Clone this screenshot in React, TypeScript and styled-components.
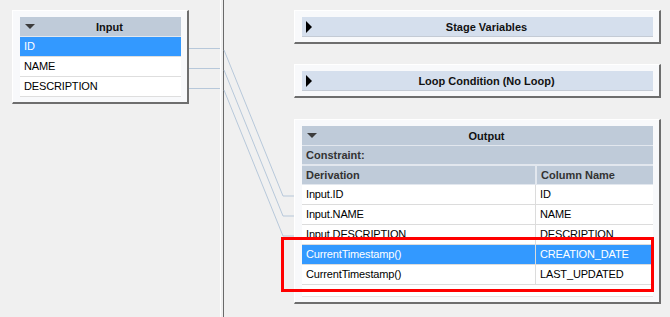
import React from "react"
import styled, { createGlobalStyle } from "styled-components"

//------------------------------
// Data
//------------------------------
type Mapping = { derivation: string; column: string; selected?: boolean }

const inputColumns = ["ID", "NAME", "DESCRIPTION"]

const mappings: Mapping[] = [
  { derivation: "Input.ID", column: "ID" },
  { derivation: "Input.NAME", column: "NAME" },
  { derivation: "Input.DESCRIPTION", column: "DESCRIPTION" },
  { derivation: "CurrentTimestamp()", column: "CREATION_DATE", selected: true },
  { derivation: "CurrentTimestamp()", column: "LAST_UPDATED" },
]

// connector links: [input row y, output row y]
const links: [number, number][] = [
  [48, 196],
  [68, 216],
  [88, 236],
]

//------------------------------
// Main
//------------------------------
export default function App() {
  return (
    <>
      <GlobalStyle />
      <Screen>
        <LeftPane>
          <Panel $width={177}>
            <PanelHeader $tone="dark">
              <ArrowCell>
                <DownArrow />
              </ArrowCell>
              <Title>Input</Title>
            </PanelHeader>
            <List>
              {inputColumns.map((name, i) => (
                <ListRow key={name} $selected={i === 0}>
                  {name}
                </ListRow>
              ))}
            </List>
          </Panel>
        </LeftPane>
        <Splitter />
        <RightPane>
          <Panel>
            <PanelHeader $tone="light">
              <ArrowCell>
                <RightArrow />
              </ArrowCell>
              <Title>Stage Variables</Title>
            </PanelHeader>
          </Panel>
          <Panel>
            <PanelHeader $tone="light">
              <ArrowCell>
                <RightArrow />
              </ArrowCell>
              <Title>Loop Condition (No Loop)</Title>
            </PanelHeader>
          </Panel>
          <OutputPanel>
            <PanelHeader $tone="dark">
              <ArrowCell>
                <DownArrow />
              </ArrowCell>
              <Title>Output</Title>
            </PanelHeader>
            <SubHeader>Constraint:</SubHeader>
            <Grid>
              <HeadCell>Derivation</HeadCell>
              <HeadCell $divider>Column Name</HeadCell>
            </Grid>
            <TableBody>
              {mappings.map((m, i) => (
                <Grid key={i}>
                  <Cell $selected={m.selected}>{m.derivation}</Cell>
                  <Cell $selected={m.selected} $divider>
                    {m.column}
                  </Cell>
                </Grid>
              ))}
            </TableBody>
            <Highlight />
          </OutputPanel>
        </RightPane>
        <Links width={670} height={317}>
          {links.map(([from, to]) => (
            <g key={from}>
              <line x1={189} y1={from + 0.5} x2={220} y2={from + 0.5} />
              <polyline
                points={`224,${from + 2} 283,${to} 294,${to}`}
                fill="none"
              />
            </g>
          ))}
        </Links>
      </Screen>
    </>
  )
}

//------------------------------
// Styles
//------------------------------
const GlobalStyle = createGlobalStyle`
  * { box-sizing: border-box; }
  body {
    margin: 0;
    background: #f0f0f0;
    font-family: "Liberation Sans", Arial, sans-serif;
    font-size: 11px;
    color: #000;
  }
`

const Screen = styled.div`
  position: relative;
  display: flex;
  width: 670px;
  height: 317px;
  overflow: hidden;
  background: #f0f0f0;
`

const LeftPane = styled.div`
  width: 220px;
  padding: 10px 0 0 12px;
`

const Splitter = styled.div`
  width: 4px;
  border-left: 1px solid #ffffff;
  border-right: 1px solid #6a6a6a;
`

const RightPane = styled.div`
  flex: 1;
  display: flex;
  flex-direction: column;
  gap: 20px;
  padding: 10px 9px 0 70px;
`

const Panel = styled.div<{ $width?: number }>`
  width: ${(p) => (p.$width ? `${p.$width}px` : "100%")};
  padding: 6px 6px 5px 7px;
  background: #f8f9fb;
  border-top: 1px solid #ffffff;
  border-left: 1px solid #ffffff;
  border-right: 2px solid #6e6e6e;
  border-bottom: 2px solid #6e6e6e;
`

const OutputPanel = styled(Panel)`
  position: relative;
  margin-top: 1px;
`

const PanelHeader = styled.div<{ $tone: "dark" | "light" }>`
  display: grid;
  grid-template-columns: 18px 1fr;
  align-items: center;
  height: 20px;
  background: ${(p) => (p.$tone === "dark" ? "#bfcbd9" : "#d5dfed")};
  border-bottom: 1px solid ${(p) => (p.$tone === "dark" ? "#e2e7ee" : "#c4cbd5")};
`

const ArrowCell = styled.div`
  display: flex;
  align-items: center;
  padding-left: 5px;
`

const DownArrow = styled.span`
  width: 0;
  height: 0;
  border-left: 5px solid transparent;
  border-right: 5px solid transparent;
  border-top: 5px solid #3c3c3c;
`

const RightArrow = styled.span`
  width: 0;
  height: 0;
  margin-left: -1px;
  border-top: 6px solid transparent;
  border-bottom: 6px solid transparent;
  border-left: 6px solid #000;
`

const Title = styled.div`
  text-align: center;
  font-weight: bold;
  color: #111;
  padding-right: 18px;
  transform: translateX(9px);
`

const List = styled.div`
  display: flex;
  flex-direction: column;
  background: #fff;
`

const ListRow = styled.div<{ $selected?: boolean }>`
  height: 20px;
  line-height: 19px;
  padding-left: 4px;
  letter-spacing: -0.15px;
  border-bottom: 1px solid #dedede;
  background: ${(p) => (p.$selected ? "#3399ff" : "#ffffff")};
  color: ${(p) => (p.$selected ? "#ffffff" : "#000")};
`

const SubHeader = styled.div`
  height: 20px;
  line-height: 18px;
  padding-left: 4px;
  background: #bfcbd9;
  border-bottom: 2px solid #e2e7ee;
  font-weight: bold;
  color: #333;
`

const Grid = styled.div`
  display: grid;
  grid-template-columns: 233px 1fr;
`

const HeadCell = styled.div<{ $divider?: boolean }>`
  height: 19px;
  line-height: 18px;
  padding-left: 4px;
  background: #bfcbd9;
  border-bottom: 1px solid #e2e7ee;
  border-left: ${(p) => (p.$divider ? "2px solid #e2e7ee" : "none")};
  font-weight: bold;
  color: #333;
`

const TableBody = styled.div`
  background: #fff;
  padding-bottom: 11px;
  border-bottom: 1px solid #e4e4e4;
`

const Cell = styled.div<{ $selected?: boolean; $divider?: boolean }>`
  height: 20px;
  line-height: 19px;
  padding-left: 4px;
  letter-spacing: -0.15px;
  border-bottom: 1px solid #dcdcdc;
  border-left: ${(p) => (p.$divider ? "1px solid #dcdcdc" : "none")};
  background: ${(p) => (p.$selected ? "#3399ff" : "#ffffff")};
  color: ${(p) => (p.$selected ? "#ffffff" : "#000")};
  white-space: nowrap;
  overflow: hidden;
`

const Highlight = styled.div`
  position: absolute;
  left: -14px;
  top: 117px;
  width: 373px;
  height: 55px;
  border: 3px solid #ff0000;
  pointer-events: none;
`

const Links = styled.svg`
  position: absolute;
  left: 0;
  top: 0;
  pointer-events: none;
  stroke: #b7c8da;
  stroke-width: 1;
`
